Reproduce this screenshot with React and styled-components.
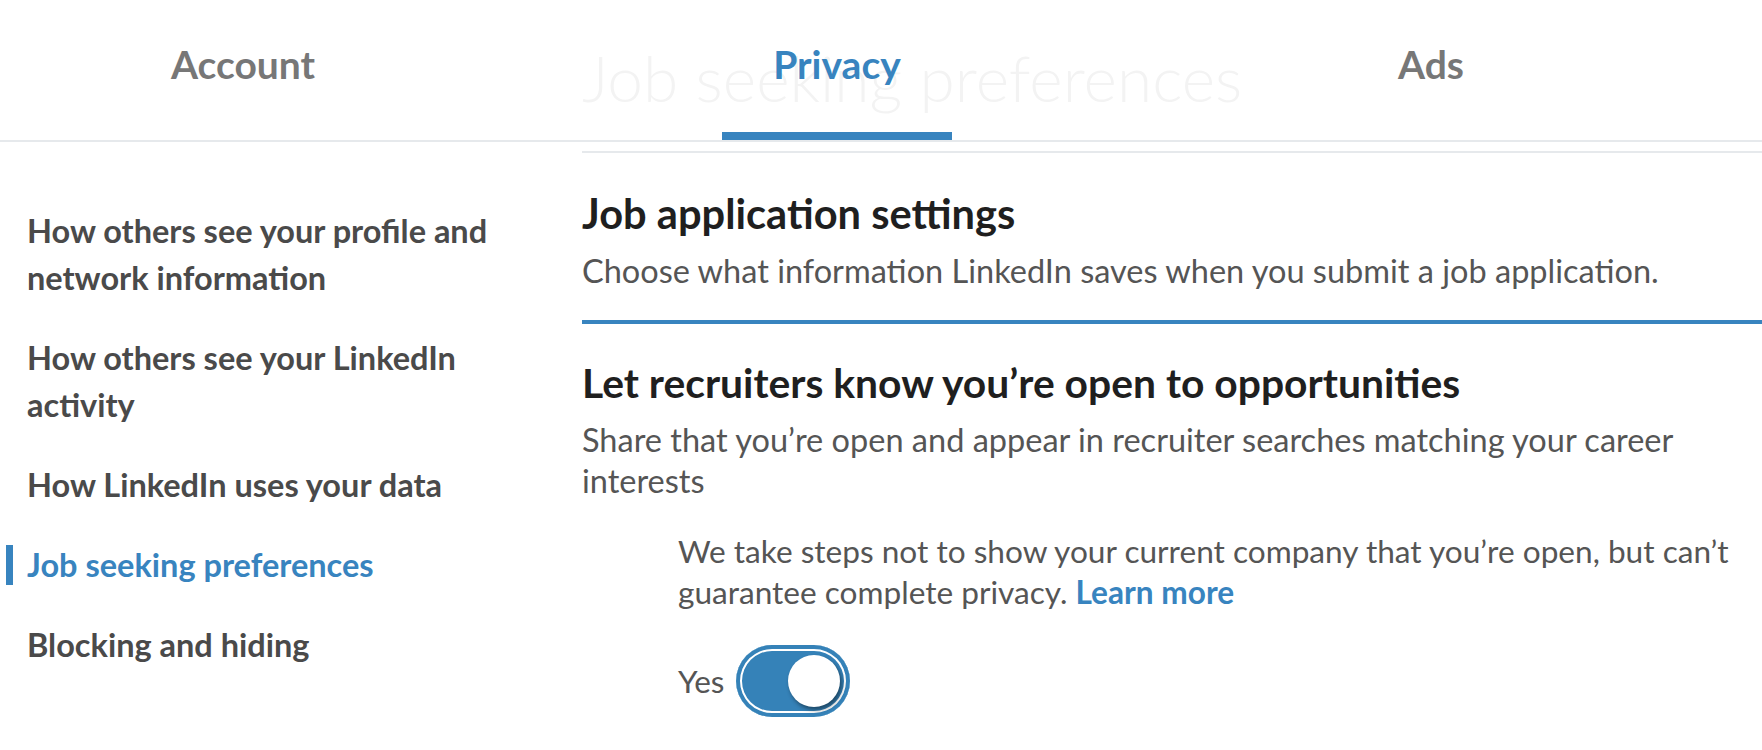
import React from "react";
import styled, { createGlobalStyle } from "styled-components";

const Global = createGlobalStyle`
  html, body { margin: 0; padding: 0; background: #fff; }
  body { font-family: Lato, "Noto Sans", "Liberation Sans", sans-serif; overflow: hidden; }
  * { box-sizing: border-box; }
`;

const BLUE = "#3884bf";

const Page = styled.div`
  position: relative;
  width: 1762px;
  height: 750px;
  overflow: hidden;
`;

const TabBar = styled.nav`
  position: absolute;
  top: 0;
  left: 0;
  right: 0;
  height: 142px;
  display: flex;
  padding-left: 128px;
  gap: 364px;
  background: rgba(255, 255, 255, 0.94);
  border-bottom: 2px solid #e6e9ec;
  z-index: 2;
`;

const Tab = styled.div`
  width: 230px;
  height: 140px;
  display: flex;
  align-items: center;
  justify-content: center;
  padding-bottom: 4px;
  font-size: 39px;
  font-weight: 700;
  color: ${(p) => (p.$active ? BLUE : "#777")};
  border-bottom: 8px solid ${(p) => (p.$active ? BLUE : "transparent")};
`;

const Layout = styled.div`
  display: grid;
  grid-template-columns: 582px 1fr;
  height: 100%;
`;

const Sidebar = styled.ul`
  list-style: none;
  margin: 0;
  padding: 207px 0 0 0;
  display: flex;
  flex-direction: column;
  gap: 33px;
`;

const NavItem = styled.li`
  position: relative;
  padding-left: 27px;
  padding-right: 60px;
  font-size: 32.5px;
  line-height: 47px;
  font-weight: 700;
  color: ${(p) => (p.$active ? BLUE : "#4a4a4a")};

  &::before {
    content: "";
    display: ${(p) => (p.$active ? "block" : "none")};
    position: absolute;
    left: 6px;
    top: 4px;
    width: 7px;
    height: 40px;
    background: ${BLUE};
  }
`;

const Main = styled.main`
  display: flex;
  flex-direction: column;
`;

const GhostTitle = styled.h1`
  margin: 0;
  padding-top: 38px;
  height: 153px;
  font-size: 64px;
  line-height: 80px;
  font-weight: 300;
  color: #333;
  white-space: nowrap;
  border-bottom: 2px solid #e6e9ec;
`;

const Section = styled.section`
  padding: ${(p) => p.$pad};
  border-bottom: ${(p) => (p.$divider ? `4px solid ${BLUE}` : "none")};
`;

const Heading = styled.h2`
  margin: 0;
  font-size: ${(p) => p.$size || "41px"};
  line-height: 50px;
  font-weight: 700;
  color: #1f1f1f;
`;

const Desc = styled.p`
  margin: ${(p) => p.$margin || "11px 0 0 0"};
  font-size: ${(p) => p.$size || "32.5px"};
  line-height: 41px;
  font-weight: 400;
  color: #555;
`;

const Note = styled.div`
  padding-left: 96px;
  margin-top: 30px;
`;

const Link = styled.a`
  color: ${BLUE};
  font-weight: 700;
  text-decoration: none;
`;

const ToggleRow = styled.div`
  display: flex;
  align-items: center;
  gap: 12px;
  margin-top: 32px;
`;

const ToggleLabel = styled.span`
  font-size: 31.5px;
  color: #555;
`;

const Track = styled.div`
  width: 114px;
  height: 72px;
  border-radius: 36px;
  background: #3582b8;
  box-shadow: inset 0 0 0 4px #3582b8, inset 0 0 0 6px #fff;
  display: flex;
  align-items: center;
  justify-content: flex-end;
  padding: 10px;
`;

const Knob = styled.div`
  width: 52px;
  height: 52px;
  border-radius: 50%;
  background: #fff;
  box-shadow: 2px 3px 4px rgba(0, 0, 0, 0.45);
`;

const navItems = [
  "How others see your profile and network information",
  "How others see your LinkedIn activity",
  "How LinkedIn uses your data",
  "Job seeking preferences",
  "Blocking and hiding",
];

export default function App() {
  return (
    <>
      <Global />
      <Page>
        <TabBar>
          <Tab>Account</Tab>
          <Tab $active>Privacy</Tab>
          <Tab>Ads</Tab>
        </TabBar>
        <Layout>
          <Sidebar>
            {navItems.map((t) => (
              <NavItem key={t} $active={t === "Job seeking preferences"}>
                {t}
              </NavItem>
            ))}
          </Sidebar>
          <Main>
            <GhostTitle>Job seeking preferences</GhostTitle>
            <Section $divider $pad="35px 0 29px 0">
              <Heading $size="41.6px">Job application settings</Heading>
              <Desc $margin="12px 0 0 0">
                Choose what information LinkedIn saves when you submit a job application.
              </Desc>
            </Section>
            <Section $pad="34px 0 0 0">
              <Heading $size="40.8px">Let recruiters know you’re open to opportunities</Heading>
              <Desc>
                Share that you’re open and appear in recruiter searches matching your career
                interests
              </Desc>
              <Note>
                <Desc $margin="0" $size="31.6px">
                  We take steps not to show your current company that you’re open, but can’t
                  guarantee complete privacy. <Link href="#">Learn more</Link>
                </Desc>
                <ToggleRow>
                  <ToggleLabel>Yes</ToggleLabel>
                  <Track>
                    <Knob />
                  </Track>
                </ToggleRow>
              </Note>
            </Section>
          </Main>
        </Layout>
      </Page>
    </>
  );
}
